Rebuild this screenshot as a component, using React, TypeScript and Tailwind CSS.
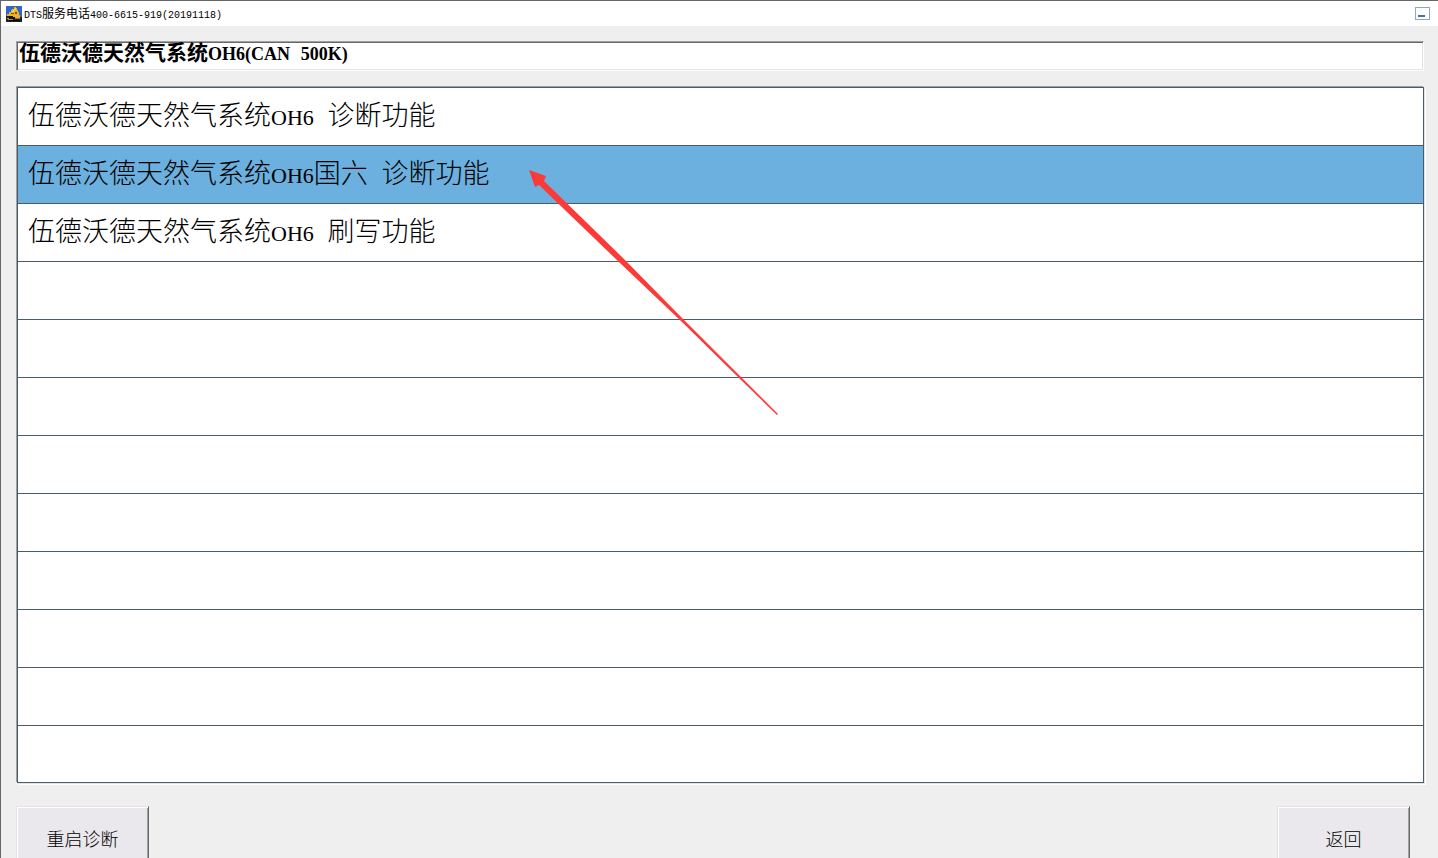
import { useState } from "react";
import clsx from "clsx";

const TITLE = "DTS服务电话400-6615-919(20191118)";
const SYSTEM = "伍德沃德天然气系统OH6(CAN 500K)";
const ROW_COUNT = 12;

const functions = [
  "伍德沃德天然气系统OH6 诊断功能",
  "伍德沃德天然气系统OH6国六 诊断功能",
  "伍德沃德天然气系统OH6 刷写功能",
];

// Latin letters and the half-width spaces get their own faces next to the Chinese
function MixedText({ text, latin, space }: { text: string; latin: string; space?: string }) {
  const parts = text.split(/([\x21-\x7e]+|\x20+)/).filter(Boolean);
  return (
    <>
      {parts.map((part, i) => {
        if (/^\x20+$/.test(part)) {
          return <span key={i} className={clsx("font-['Liberation_Mono',monospace]", space)}>{part}</span>;
        }
        if (/^[\x21-\x7e]+$/.test(part)) {
          return <span key={i} className={latin}>{part}</span>;
        }
        return part;
      })}
    </>
  );
}

function AppIcon() {
  return (
    <svg viewBox="0 0 16 16" className="size-4 shrink-0" shapeRendering="crispEdges" aria-hidden="true">
      <rect width="16" height="16" fill="#2c68cc" />
      <path d="M0 10h3V9h10v2h3v5H0z" fill="#1a2136" />
      <path d="M8 1h2v1h1v2h1v2h1v3h1v3H8v-1H6v-1H1V8h2V6h2V4h1V3h2z" fill="#eeb222" />
      <path d="M9 2h1v2H8v2H6V5h1V4h1V3h1z" fill="#f8d75c" />
      <path d="M5 7h3v1H5zM9 6h2v2H9z" fill="#7a5016" />
      <path d="M3 10h4v1h2v2H3z" fill="#111219" />
      <path d="M1 12h2v1h4v1H2v-1H1z" fill="#c48f1b" />
      <path d="M9 12h5v1H9z" fill="#9a7324" />
      <path d="M3 14h11v1H3z" fill="#06070b" />
    </svg>
  );
}

function TitleBar() {
  return (
    <header className="flex h-[25px] shrink-0 items-center justify-between bg-white pl-[5px] pr-2">
      <div className="flex items-center gap-0.5">
        <AppIcon />
        <span className="whitespace-pre pt-0.5 text-xs leading-4">
          <MixedText text={TITLE} latin="font-['Liberation_Mono',monospace] text-[10px]" />
        </span>
      </div>
      <button
        type="button"
        aria-label="最小化"
        className="flex h-[13px] w-[15px] items-end border border-[#8aaac4] bg-white pb-0.5 pl-0.5"
      >
        <span className="h-0.5 w-[7px] bg-[#4a6ea8]" />
      </button>
    </header>
  );
}

function FooterButton({ label }: { label: string }) {
  return (
    <button
      type="button"
      className="h-[66px] w-[133px] border border-b-[#696969] border-l-[#e3e3e3] border-r-[#696969] border-t-[#e3e3e3] bg-[#eae8ed] pb-0.5 text-lg font-light shadow-[inset_1px_1px_#fff,inset_-1px_-1px_#a0a0a0]"
    >
      {label}
    </button>
  );
}

function Arrow() {
  return (
    <svg
      viewBox="0 0 250 246"
      className="pointer-events-none absolute left-[527px] top-[168px] h-[246px] w-[250px]"
      aria-hidden="true"
    >
      <path d="M1 1L18 7L16 12L96 90L155 150L212 207L250 245L249 246L211 209L154 153L92 94L11 16L7 18Z" fill="#fd3a38" />
    </svg>
  );
}

export default function App() {
  const [selected, setSelected] = useState(1);

  return (
    <div className="relative flex h-screen flex-col overflow-hidden border-l border-t border-[#666] bg-[#efefef] font-['Noto_Sans_CJK_SC',sans-serif] text-black">
      <TitleBar />
      <main className="flex flex-col gap-4 pl-[15px] pr-3.5 pt-[15px]">
        <h1 className="h-[30px] whitespace-pre border border-b-white border-l-[#a0a0a0] border-r-white border-t-[#a0a0a0] bg-white pl-0.5 text-[21px] font-bold leading-[18px] shadow-[inset_1px_1px_#696969,inset_-1px_-1px_#e3e3e3]">
          <MixedText
            text={SYSTEM}
            latin="font-['Liberation_Serif',serif] text-lg leading-none"
            space="text-lg leading-none"
          />
        </h1>

        <ul className="ml-px border border-[#4a5c68] bg-white shadow-[-1px_-1px_#a0a0a0,1px_1px_#e3e3e3,2px_2px_#fff]">
          {Array.from({ length: ROW_COUNT }, (_, i) => (
            <li key={i} className="h-[58px] border-b border-[#4a5c68] last:h-14 last:border-b-0">
              {functions[i] && (
                <button
                  type="button"
                  aria-pressed={i === selected}
                  onClick={() => setSelected(i)}
                  className={clsx(
                    "flex h-full w-full items-center whitespace-pre px-2.5 pb-0.5 text-left text-[27px] font-light",
                    i === selected ? "bg-[#6bb0de]" : "bg-white"
                  )}
                >
                  <span>
                    <MixedText
                      text={functions[i]}
                      latin="font-['Liberation_Serif',serif] text-[22px]"
                      space="text-[23px]"
                    />
                  </span>
                </button>
              )}
            </li>
          ))}
        </ul>
      </main>

      <footer className="flex justify-between pl-[15px] pr-7 pt-[23px]">
        <FooterButton label="重启诊断" />
        <FooterButton label="返回" />
      </footer>
      <Arrow />
    </div>
  );
}
